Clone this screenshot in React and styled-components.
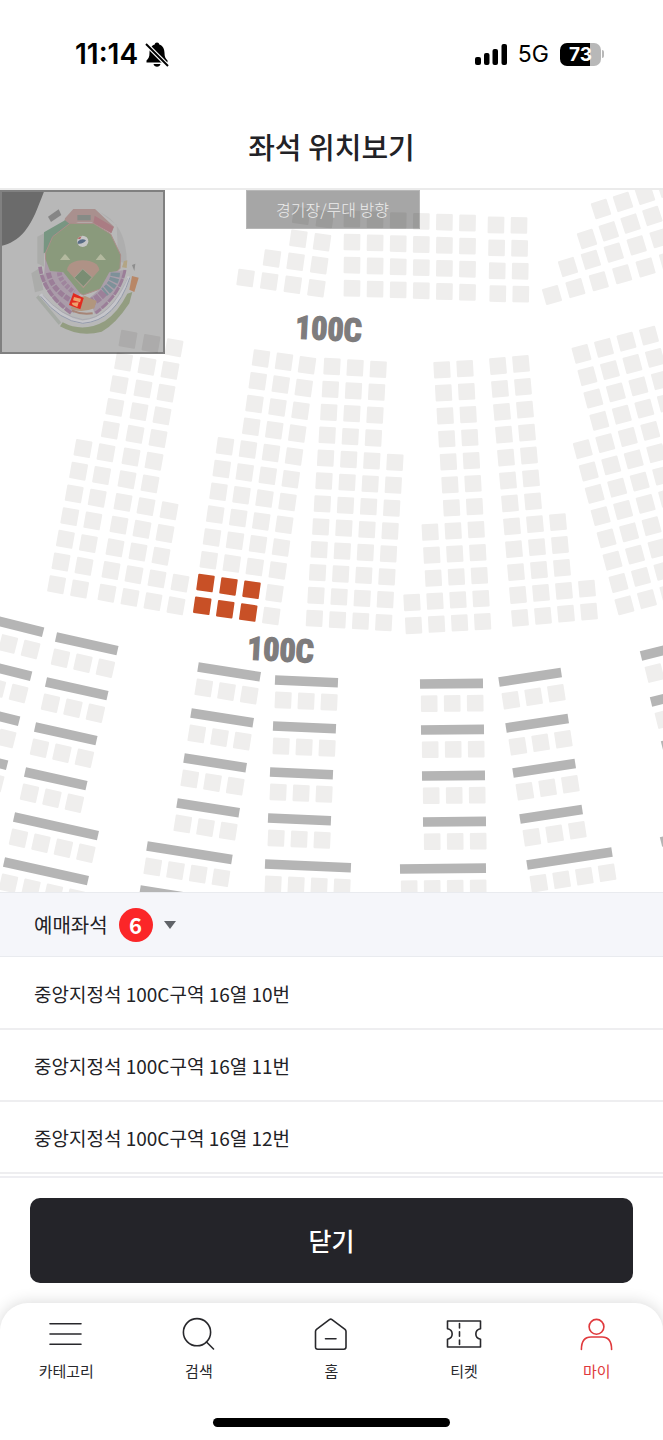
import React, { useState } from 'react';
import styled, { createGlobalStyle } from 'styled-components';

const GlobalStyle = createGlobalStyle`
	* {
		box-sizing: border-box;
	}
	body {
		margin: 0;
		background: #fff;
		color: #222226;
		font-family: 'Noto Sans CJK KR', 'Noto Sans', sans-serif;
	}
`;

const Page = styled.div`
	display: flex;
	flex-direction: column;
	min-height: 100vh;
`;

const StatusBar = styled.div`
	display: flex;
	align-items: center;
	justify-content: space-between;
	height: 108px;
	padding: 0 59px 0 75px;
	color: #000;
	font-family: Inter, sans-serif;
`;

const StatusGroup = styled.div`
	display: flex;
	align-items: center;
	gap: ${({ $gap }) => $gap}px;
`;

const Time = styled.span`
	font-size: 28px;
	font-weight: 600;
	line-height: 32px;
`;

const Network = styled.span`
	font-size: 23px;
	line-height: 32px;
`;

const Battery = styled.div`
	display: flex;
	align-items: center;
	gap: 1px;

	&::after {
		content: '';
		width: 2px;
		height: 8px;
		border-radius: 0 2px 2px 0;
		background: #b8b8b8;
	}
`;

const BatteryLevel = styled.span`
	width: 41px;
	border-radius: 7px;
	background: linear-gradient(to right, #000 73%, #b8b8b8 73%);
	color: #fff;
	font-size: 19px;
	font-weight: 700;
	line-height: 23px;
	text-align: center;
`;

const Header = styled.header`
	display: flex;
	align-items: center;
	justify-content: center;
	height: 82px;
	padding-bottom: 4px;
	border-bottom: 2px solid #ebebeb;
`;

const Title = styled.h1`
	margin: 0;
	font-size: 29px;
	font-weight: 500;
	line-height: 40px;
`;

const MapArea = styled.main`
	position: relative;
	overflow: hidden;
`;

const MapSvg = styled.svg`
	display: block;
	width: 100%;
	height: auto;
`;

const MiniMap = styled.svg`
	position: absolute;
	top: 0;
	left: 0;
	width: 165px;
	height: 164px;
	border: 2px solid rgba(0, 0, 0, 0.3);
	background: rgba(0, 0, 0, 0.28);
`;

const Direction = styled.div`
	position: absolute;
	top: 0;
	left: 50%;
	width: 174px;
	margin-left: -86px;
	border: 1px solid rgba(255, 255, 255, 0.2);
	background: rgba(0, 0, 0, 0.35);
	color: #ececec;
	font-size: 16px;
	font-weight: 300;
	line-height: 37px;
	text-align: center;
`;

const ListToggle = styled.button`
	display: flex;
	align-items: center;
	gap: 11px;
	height: 65px;
	padding: 0 34px;
	border: solid #e9ebef;
	border-width: 1px 0;
	background: #f5f6fa;
	color: inherit;
	font-family: inherit;
	font-size: 20px;
	line-height: 30px;
`;

const Count = styled.span`
	width: 34px;
	padding-bottom: 2px;
	border-radius: 17px;
	background: #fb2628;
	color: #fff;
	font-size: 22px;
	font-weight: 700;
	line-height: 32px;
	text-align: center;
`;

const Caret = styled.span`
	border: solid transparent;
	border-width: 8px 6px 0;
	border-top-color: #606368;
`;

const SeatList = styled.ul`
	margin: 0;
	padding: 1px 0 2px;
	list-style: none;
`;

const SeatItem = styled.li`
	display: flex;
	align-items: center;
	height: 72px;
	padding: 2px 34px 0;
	border-bottom: 2px solid #eeeef0;
	font-size: 19px;
	line-height: 28px;
`;

const Footer = styled.div`
	padding: 20px 30px;
	border-top: 2px solid #eeeef2;
`;

const CloseButton = styled.button`
	width: 100%;
	height: 85px;
	padding: 0 0 2px;
	border: 0;
	border-radius: 10px;
	background: #242429;
	color: #fff;
	font-family: inherit;
	font-size: 25px;
	font-weight: 500;
`;

const BottomBar = styled.div`
	flex: 1;
	padding: 13px 0;
	border-radius: 28px 28px 0 0;
	background: #fff;
	box-shadow: 0 0 16px rgba(0, 0, 0, 0.16);
`;

const Nav = styled.nav`
	display: grid;
	grid-template-columns: repeat(5, 1fr);
`;

const NavLink = styled.a`
	display: flex;
	flex-direction: column;
	align-items: center;
	gap: 9px;
	color: ${({ $active }) => ($active ? '#e0393c' : '#28282c')};
	font-size: 15px;
	line-height: 20px;
	text-decoration: none;
`;

const HomeIndicator = styled.div`
	width: 237px;
	height: 9px;
	margin: 37px auto 0;
	border-radius: 5px;
	background: #000;
`;

// col / row are the steps between seat centres, rows hold [first column, seat count]
const fill = (n, row) => Array.from({ length: n }, () => row);

const blocks = [
	{ x: 254, y: 209, angle: 8, col: [23.6, 3.4], row: [-2.8, 23], rows: [[2, 2], [2, 2], [1, 3], [0, 4]] },
	{ x: 352, y: 219, angle: 1, col: [23.1, 0.8], row: [0, 23.1], rows: fill(4, [0, 6]) },
	{ x: 496, y: 225, angle: 1, col: [23, 0.4], row: [0.6, 22.9], rows: fill(4, [0, 2]) },
	{ x: 601, y: 209, angle: -18, col: [22, -7.1], row: [0, 0], rows: [[0, 4]] },
	{ x: 587, y: 239, angle: -18, col: [21.8, -7.7], row: [0, 0], rows: [[0, 5]] },
	{ x: 568, y: 267, angle: -17, col: [22.9, -7.2], row: [0, 0], rows: [[0, 5]] },
	{ x: 552, y: 295, angle: -16, col: [23.4, -6.9], row: [0, 0], rows: [[0, 6]] },
	{ x: 105, y: 335, angle: 10, col: [23, 4.3], row: [-4.4, 22.7], rows: [...fill(5, [1, 1]), ...fill(7, [0, 2])] },
	{ x: 151, y: 343.5, angle: 10, col: [23, 4.2], row: [-4, 22.7], rows: [...fill(7, [0, 2]), ...fill(3, [0, 3]), ...fill(2, [0, 4])] },
	{ x: 238, y: 355, angle: 8, col: [23, 3.4], row: [-3.25, 22.8], rows: [...fill(4, [1, 3]), ...fill(8, [0, 4])], booked: [10, 11] },
	{ x: 332, y: 366.5, angle: 3, col: [23.1, 1.4], row: [-1.6, 22.9], rows: [...fill(4, [0, 3]), ...fill(8, [0, 4])] },
	{ x: 396, y: 372.5, angle: -3, col: [23, -1.3], row: [1.6, 23], rows: [...fill(7, [2, 2]), ...fill(3, [1, 3]), ...fill(2, [0, 4])] },
	{ x: 498, y: 366, angle: -5, col: [23, -2.1], row: [2, 22.9], rows: [...fill(7, [0, 2]), ...fill(3, [0, 3]), ...fill(2, [0, 4])] },
	{ x: 559, y: 360, angle: -15, col: [22.5, -6.1], row: [5.95, 22.3], rows: [...fill(4, [1, 4]), ...fill(8, [0, 5])] },
];

// each table is [x, y of the left end, number of seats]
const tableGroups = [
	{ angle: 14, tables: [[-18, 617, 3], [-30, 661, 3], [-42, 706, 3], [-54, 750, 3]] },
	{ angle: 12.5, tables: [[56, 637, 3], [46, 682, 3], [35, 727, 3], [25, 772, 3], [14, 817, 4], [4, 862, 4]] },
	{ angle: 9, tables: [[198, 667, 3], [191, 713, 3], [184, 758, 3], [177, 803, 3], [147, 846, 4], [140, 890, 4]] },
	{ angle: 2.5, tables: [[275, 680, 3], [273, 726, 3], [270, 772, 3], [268, 818, 3], [265, 864, 4]] },
	{ angle: -0.6, tables: [[420, 684, 3], [421, 730, 3], [422, 776, 3], [423, 822, 3], [400, 869, 4]] },
	{ angle: -8.7, tables: [[499, 682, 3], [506, 728, 3], [513, 773, 3], [520, 819, 3], [527, 865, 4]] },
	{ angle: -14, tables: [[641, 656, 3], [651, 702, 3], [662, 746, 3], [661, 842, 4]] },
];

const Seat = ({ x, y, angle = 0, booked }) => (
	<rect
		x={x - 8.3}
		y={y - 8.3}
		width='16.6'
		height='16.6'
		rx='1'
		fill={booked ? '#c85026' : '#efeeed'}
		transform={`rotate(${angle} ${x} ${y})`}
	/>
);

const SeatBlock = ({ x, y, angle, col, row, rows, booked = [] }) =>
	rows.map(([first, count], r) =>
		Array.from({ length: count }, (_, i) => {
			const c = first + i;
			return (
				<Seat
					key={`${r}-${c}`}
					x={x + c * col[0] + r * row[0]}
					y={y + c * col[1] + r * row[1]}
					angle={angle}
					booked={booked.includes(r) && c < 3}
				/>
			);
		})
	);

const Table = ({ x, y, angle, seats }) => (
	<g transform={`translate(${x} ${y}) rotate(${angle})`}>
		<rect y='-4.8' width={seats * 23 - 6} height='9.6' fill='#b5b5b5' />
		{Array.from({ length: seats }, (_, i) => (
			<Seat key={i} x={9 + i * 23} y={19.8} />
		))}
	</g>
);

const sectionFont = {
	fontFamily: "'Roboto Condensed', 'Liberation Sans Narrow', Roboto, sans-serif",
	fontSize: 32,
	fontWeight: 700,
	textAnchor: 'middle',
	fill: '#7e7c7d',
	stroke: '#7e7c7d',
	strokeWidth: 1.4,
};

const SeatMap = () => (
	<MapSvg viewBox='0 190 663 702' role='img' aria-label='좌석 배치도'>
		{blocks.map((block, i) => (
			<SeatBlock key={i} {...block} />
		))}
		{tableGroups.map(({ angle, tables }) =>
			tables.map(([x, y, seats]) => <Table key={`${x}-${y}`} x={x} y={y} angle={angle} seats={seats} />)
		)}
		<text {...sectionFont} transform='translate(328 340) rotate(3)'>
			100C
		</text>
		<text {...sectionFont} transform='translate(280 661) rotate(3)'>
			100C
		</text>
	</MapSvg>
);

const Stadium = () => (
	<MiniMap viewBox='6 21 483 480' aria-hidden='true'>
		<path d='M0 0H140C115 60 105 100 75 138C50 168 25 178 0 184Z' fill='#6b6b6b' />
		<g opacity='0.82'>
			<path d='M300 82C350 105 382 155 380 235L355 230L350 120Z' fill='#adadad' />
			<path d='M112 155L132 145V245L112 235Z M94 265L118 250L130 315L105 322Z' fill='#a9aaa8' />
			<path d='M144 95L176 73L184 90L153 111Z' fill='#7c7c7c' />
			<path d='M220 72H285L342 125L334 145L275 112H235L190 125L195 100Z' fill='#a68886' />
			<path d='M232 90H272V106H232Z' fill='#7c827c' />
			<path d='M284 92L341 126L334 144L280 114Z' fill='#a86f78' />
			<path d='M132 142L195 106L208 116L158 160L142 200L131 205Z' fill='#6a8f77' />
			<path
				d='M210 115H280L332 147L362 210L360 250L300 312L250 330L200 305L138 250L136 205L158 155Z'
				fill='#819470'
				stroke='#a98580'
				strokeWidth='3'
			/>
			<path d='M136 222L150 258L190 262L240 325L222 385L165 350L130 300Z' fill='#a797a6' />
			<path d='M120 245Q130 325 215 385' fill='none' stroke='#957292' strokeWidth='11' strokeDasharray='22 3' />
			<path d='M145 263Q155 315 222 352' fill='none' stroke='#957292' strokeWidth='15' strokeDasharray='18 4' />
			<path d='M178 262Q180 290 222 322' fill='none' stroke='#9a7b98' strokeWidth='15' strokeDasharray='11 4' />
			<path d='M328 262L378 254Q365 325 285 388L268 340L300 312Z' fill='#a799a7' />
			<path d='M375 255Q360 330 287 384' fill='none' stroke='#957292' strokeWidth='9' strokeDasharray='25 3' />
			<path d='M346 263Q345 298 312 322' fill='none' stroke='#728993' strokeWidth='28' strokeDasharray='12 4' />
			<path d='M312 322Q295 342 275 350' fill='none' stroke='#967493' strokeWidth='24' strokeDasharray='16 3' />
			<path d='M212 372Q245 385 283 370L290 348L255 333L225 340Z' fill='#b08f72' />
			<path d='M216 377Q245 390 278 385' fill='none' stroke='#a37a69' strokeWidth='6' />
			<path d='M122 328Q180 402 248 412Q340 405 388 275' fill='none' stroke='#c9c9ce' strokeWidth='10' />
			<path d='M122 334Q180 408 248 415Q347 408 390 277' fill='none' stroke='#8c94a8' strokeWidth='3' />
			<path d='M128 330Q185 394 248 404Q330 400 383 280' fill='none' stroke='#9d9dac' strokeWidth='2' />
			<path d='M112 334L180 416' stroke='#a2a7a0' strokeWidth='10' fill='none' />
			<path d='M188 412Q250 445 315 408Q355 380 382 326L397 321L388 355Q345 420 305 440Q240 458 180 424Z' fill='#8b9875' />
			<path d='M396 273L416 278L403 321L388 314Z' fill='#b87d56' />
			<path d='M396 240L406 236L403 258Z' fill='#858585' />
			<path d='M372 228L382 226L380 249L366 247Z' fill='#b3a27a' />
			<path d='M201 255Q205 228 248 226Q294 228 298 255L250 310Z' fill='#ae8a7c' />
			<path d='M248 252L276 277L250 305L223 278Z' fill='#6d8464' stroke='#a4a894' strokeWidth='2' />
		</g>
		<circle cx='248' cy='169' r='17' fill='#c6c6c6' />
		<path d='M233 170Q245 158 258 166Q250 178 233 176Z' fill='#586c86' />
		<path d='M231 160L245 154L240 163Z' fill='#b46663' />
		<path d='M180 225L190 212L195 207L201 213L211 225Z M287 225L297 212L302 207L308 213L318 225Z' fill='#b3b99f' />
		<path d='M220 324L251 339L241 373L207 360Z' fill='#e22a1f' />
		<path d='M222 336L243 341L240 352L219 346Z M215 353L236 352L232 366L218 360Z' fill='#eea16d' />
	</MiniMap>
);

const BellOff = () => (
	<svg width='24' height='25' viewBox='0 0 24 25' aria-hidden='true'>
		<path d='M12 0.5C13.5 0.5 14 1.5 14.3 2.4C18 3.8 19.5 7 19.5 11C19.5 15 20.5 16.5 22.5 18.5V20.5H1.5V18.5C3.5 16.5 4.5 15 4.5 11C4.5 7 6 3.8 9.7 2.4C10 1.5 10.5 0.5 12 0.5Z' />
		<path d='M8.5 22H15.5C15 23.8 13.8 24.7 12 24.7C10.2 24.7 9 23.8 8.5 22Z' />
		<path d='M1 2L23 24' stroke='#fff' strokeWidth='4.4' />
		<path d='M1 2L23 24' stroke='#000' strokeWidth='2' />
	</svg>
);

const Signal = () => (
	<svg width='32' height='21' viewBox='0 0 32 21' aria-hidden='true'>
		<rect x='0' y='13' width='6' height='8' rx='2' />
		<rect x='9' y='9' width='5.5' height='12' rx='2' />
		<rect x='17.5' y='5' width='5.5' height='16' rx='2' />
		<rect x='26.5' y='0' width='5.5' height='21' rx='2' />
	</svg>
);

const navItems = [
	{ label: '카테고리', icon: <path d='M2 7.7H33M2 18H33M2 28.3H33' /> },
	{
		label: '검색',
		icon: (
			<>
				<circle cx='16' cy='16.2' r='13.6' />
				<path d='M25.5 26L32.5 33' />
			</>
		),
	},
	{
		label: '홈',
		icon: <path d='M2.5 15.5C2.5 14.6 2.8 14 3.5 13.4L16.4 3.6C17.3 3 18.2 3 19 3.6L32 13.4C32.7 14 33 14.6 33 15.5V31C33 32.5 32.3 33.2 30.8 33.2H4.7C3.2 33.2 2.5 32.5 2.5 31ZM12.5 22.7H23' />,
	},
	{
		label: '티켓',
		icon: (
			<>
				<path d='M1.5 5H34.5V12.8C28.3 14 28.3 22 34.5 23.2V31H1.5V23.2C7.7 22 7.7 14 1.5 12.8Z' />
				<path d='M13.5 7.5V12M13.5 15.7V20.3M13.5 24V28.5' />
			</>
		),
	},
	{
		label: '마이',
		active: true,
		icon: (
			<>
				<circle cx='17.5' cy='10.8' r='7.4' />
				<path d='M2.4 33.5C2.4 25.5 5.5 21 12 21H23C29.5 21 32.6 25.5 32.6 33.5' />
			</>
		),
	},
];

const seats = ['중앙지정석 100C구역 16열 10번', '중앙지정석 100C구역 16열 11번', '중앙지정석 100C구역 16열 12번'];

const App = () => {
	const [open, setOpen] = useState(true);

	return (
		<Page>
			<GlobalStyle />
			<StatusBar>
				<StatusGroup $gap={7}>
					<Time>11:14</Time>
					<BellOff />
				</StatusGroup>
				<StatusGroup $gap={11}>
					<Signal />
					<Network>5G</Network>
					<Battery>
						<BatteryLevel>73</BatteryLevel>
					</Battery>
				</StatusGroup>
			</StatusBar>
			<Header>
				<Title>좌석 위치보기</Title>
			</Header>
			<MapArea>
				<SeatMap />
				<Stadium />
				<Direction>경기장/무대 방향</Direction>
			</MapArea>
			<ListToggle type='button' aria-expanded={open} onClick={() => setOpen(!open)}>
				예매좌석
				<Count>6</Count>
				<Caret />
			</ListToggle>
			{open && (
				<SeatList>
					{seats.map((seat) => (
						<SeatItem key={seat}>{seat}</SeatItem>
					))}
				</SeatList>
			)}
			<Footer>
				<CloseButton type='button'>닫기</CloseButton>
			</Footer>
			<BottomBar>
				<Nav>
					{navItems.map(({ label, icon, active }) => (
						<NavLink key={label} href='#' $active={active}>
							<svg
								width='36'
								height='36'
								viewBox='0 0 36 36'
								fill='none'
								stroke='currentColor'
								strokeWidth='1.6'
								strokeLinecap='round'
								strokeLinejoin='round'
								aria-hidden='true'
							>
								{icon}
							</svg>
							{label}
						</NavLink>
					))}
				</Nav>
				<HomeIndicator />
			</BottomBar>
		</Page>
	);
};

export default App;
